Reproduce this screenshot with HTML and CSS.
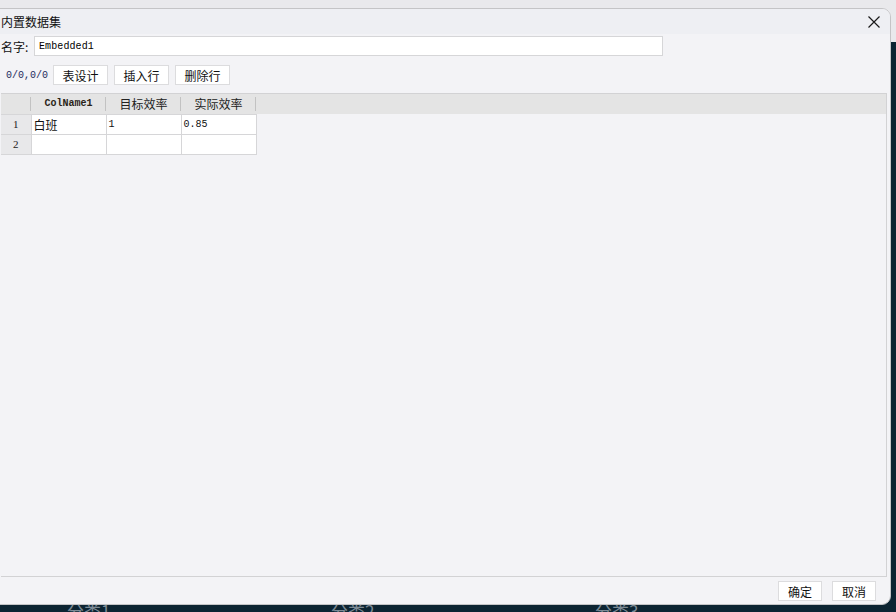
FILE: index.html
```html
<!DOCTYPE html>
<html lang="zh-CN">
<head>
    <meta charset="utf-8">
    <title>内置数据集</title>
    <meta name="viewport" content="width=device-width, initial-scale=1">
    <link rel="stylesheet" href="styles.css">
</head>
<body>
    <div class="dialog">
        <div class="title-bar">
            <span class="title">内置数据集</span>
            <button class="close-btn" aria-label="关闭">
                <svg width="12" height="12" viewBox="0 0 12 12">
                    <path d="M0.5 0.5 L11.5 11.5 M11.5 0.5 L0.5 11.5" stroke="#1a1a1a" stroke-width="1.2" fill="none"/>
                </svg>
            </button>
        </div>

        <div class="dialog-body">
            <div class="name-row">
                <label class="name-label" for="ds-name">名字:</label>
                <input class="name-input" id="ds-name" type="text" value="Embedded1">
            </div>

            <div class="toolbar">
                <span class="counter">0/0,0/0</span>
                <button class="tool-btn">表设计</button>
                <button class="tool-btn">插入行</button>
                <button class="tool-btn">删除行</button>
            </div>

            <div class="grid-box">
                <table class="grid">
                    <thead>
                        <tr>
                            <th class="corner"></th>
                            <th class="mono">ColName1</th>
                            <th>目标效率</th>
                            <th>实际效率</th>
                            <th class="filler"></th>
                        </tr>
                    </thead>
                    <tbody>
                        <tr>
                            <td class="row-no">1</td>
                            <td class="cell">白班</td>
                            <td class="cell mono">1</td>
                            <td class="cell mono">0.85</td>
                        </tr>
                        <tr>
                            <td class="row-no">2</td>
                            <td class="cell"></td>
                            <td class="cell"></td>
                            <td class="cell"></td>
                        </tr>
                    </tbody>
                </table>
            </div>

            <div class="footer">
                <button class="tool-btn footer-btn">确定</button>
                <button class="tool-btn footer-btn">取消</button>
            </div>
        </div>
    </div>

    <div class="taskbar">
        <span>分类1</span>
        <span>分类2</span>
        <span>分类3</span>
    </div>
</body>
</html>
```

FILE: styles.css
```css
* {
    margin: 0;
    padding: 0;
    box-sizing: border-box;
}

body {
    width: 896px;
    height: 612px;
    overflow: hidden;
    font-family: "Noto Sans CJK SC", "Noto Sans", sans-serif;
    font-size: 12px;
    color: #111;
    background: linear-gradient(#e9e9ec 0, #e9e9ec 42px, #0c2432 42px);
    padding-top: 8px;
}

.dialog {
    width: 892px;
    height: 597px;
    margin-left: -1px;
    background: #f3f3f6;
    border: 1px solid #c4c4c6;
    border-radius: 0 9px 9px 0;
    display: flex;
    flex-direction: column;
    overflow: hidden;
}

.title-bar {
    height: 25px;
    background: #eeeff3;
    display: flex;
    align-items: center;
    justify-content: space-between;
    padding: 0 10px 0 1px;
}

.title {
    font-size: 12px;
    line-height: 14px;
}

.close-btn {
    background: none;
    border: none;
    width: 12px;
    height: 12px;
    display: flex;
}

.dialog-body {
    flex: 1;
    display: flex;
    flex-direction: column;
    padding: 2px 0 3px 1px;
}

.name-row {
    display: flex;
    align-items: center;
    height: 20px;
    gap: 3px;
}

.name-label {
    font-size: 12px;
    width: 30px;
    white-space: nowrap;
}

.name-input {
    width: 629px;
    height: 20px;
    border: 1px solid #d6d6d8;
    background: #fff;
    font-family: "Liberation Mono", monospace;
    font-size: 10px;
    letter-spacing: 0.1px;
    color: #000;
    padding: 0 4px;
    outline: none;
}

.toolbar {
    display: flex;
    align-items: center;
    height: 20px;
    margin-top: 9px;
    padding-left: 5px;
}

.counter {
    font-family: "Liberation Mono", monospace;
    font-size: 10px;
    color: #1d2b5c;
    margin-right: 5px;
}

.tool-btn {
    height: 20px;
    width: 55px;
    background: #fff;
    border: 1px solid #dcdcde;
    font-family: "Noto Sans CJK SC", "Noto Sans", sans-serif;
    font-size: 12px;
    color: #111;
    margin-right: 6px;
}

.grid-box {
    margin-top: 8px;
    width: 886px;
    height: 484px;
    border: 1px solid #d2d2d4;
    border-left: none;
}

.grid {
    border-collapse: collapse;
    width: 100%;
}

.grid th {
    height: 20px;
    font-weight: normal;
    font-size: 12px;
    background: linear-gradient(#c2c2c2, #c2c2c2) right center / 1px 14px no-repeat, #e4e4e4;
    color: #222;
    width: 75px;
    text-align: center;
    padding: 0;
}

.grid th.corner {
    width: 30px;
}

.grid th.filler {
    width: auto;
    background: #e4e4e4;
}

.mono {
    font-family: "Liberation Mono", monospace;
    font-size: 10px;
}

.grid th.mono {
    font-size: 10px;
    font-weight: bold;
    color: #2a2418;
}

.row-no {
    height: 20px;
    background: #e8e8ea;
    border: 1px solid #d6d6d8;
    border-left: none;
    text-align: center;
    font-family: "Liberation Serif", serif;
    font-size: 11px;
    color: #222;
}

.cell {
    height: 20px;
    background: #fff;
    border: 1px solid #d6d6d8;
    padding: 0 2px;
    font-size: 12px;
}

.cell.mono {
    font-size: 10px;
    color: #111;
}

.footer {
    display: flex;
    justify-content: flex-end;
    margin-top: 4px;
    padding-right: 14px;
}

.footer-btn {
    width: 44px;
    margin-right: 0;
    margin-left: 10px;
}

.taskbar {
    height: 7px;
    overflow: hidden;
    display: flex;
    padding-left: 67px;
    gap: 214px;
}

.taskbar span {
    font-size: 17px;
    line-height: 17px;
    margin-top: -3px;
    color: #7c8a95;
    width: 50px;
}
```
